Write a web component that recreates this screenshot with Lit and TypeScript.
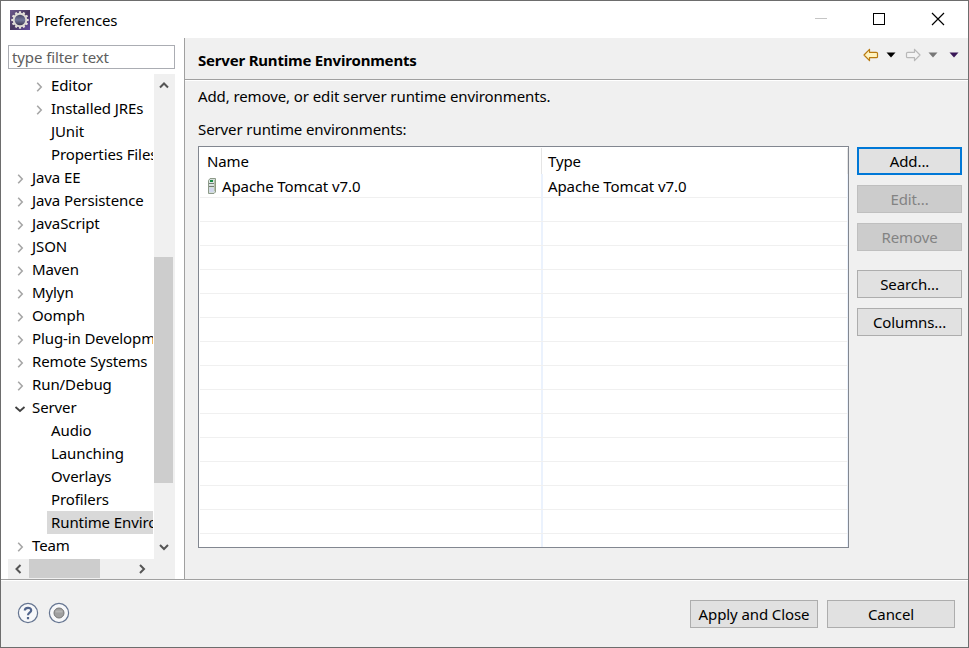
import { LitElement, html, svg, css } from "lit";
import { customElement, property } from "lit/decorators.js";
import { classMap } from "lit/directives/class-map.js";

interface Node { label: string; level: number; state: "closed" | "open" | "leaf"; selected?: boolean; }

const n = (label: string, level = 0, state: Node["state"] = "closed", selected = false): Node => ({ label, level, state, selected });

const NODES: Node[] = [
  n("Editor", 1), n("Installed JREs", 1), n("JUnit", 1, "leaf"), n("Properties Files Editor", 1, "leaf"),
  n("Java EE"), n("Java Persistence"), n("JavaScript"), n("JSON"), n("Maven"), n("Mylyn"), n("Oomph"),
  n("Plug-in Development"), n("Remote Systems"), n("Run/Debug"), n("Server", 0, "open"),
  n("Audio", 1, "leaf"), n("Launching", 1, "leaf"), n("Overlays", 1, "leaf"), n("Profilers", 1, "leaf"),
  n("Runtime Environments", 1, "leaf", true), n("Team"),
];

const chevron = (dir: "up" | "down" | "left" | "right") => {
  const d = { up: "M1 7.5L5 3.5L9 7.5", down: "M1 3L5 7L9 3", left: "M7.5 1L3.5 5L7.5 9", right: "M3 1L7 5L3 9" }[dir];
  return html`<svg width="10" height="10" viewBox="0 0 10 10"><path d=${d} fill="none" stroke="#555" stroke-width="2"/></svg>`;
};

@customElement("pref-tree")
class PrefTree extends LitElement {
  static styles = css`
    :host { display: grid; grid-template: 485px 20px / 146px 20px; background: #f0f0f0; }
    .rows { overflow: hidden; background: #fff; }
    .row { display: flex; height: 23px; white-space: nowrap; align-items: center; line-height: 23px; }
    .twist { width: 20px; height: 23px; flex: none; display: flex; align-items: center; padding: 2px 0 0 2px; box-sizing: border-box; }
    .sub .twist { margin-left: 19px; }
    .label { height: 23px; padding-left: 4px; flex: 1; margin-right: 1px; overflow: hidden; letter-spacing: var(--ls); }
    .selected .label { background: #d9d9d9; }
    .vbar { display: flex; flex-direction: column; align-items: center; padding: 6px 0 7px; box-sizing: border-box; }
    .vthumb { width: 19px; height: 226px; background: #cdcdcd; margin: 167px 1px auto 0; flex: none; }
    .hbar { display: flex; align-items: center; padding: 0 7px 0 5px; height: 20px; box-sizing: border-box; }
    .hthumb { width: 71px; height: 19px; background: #cdcdcd; margin: 0 auto 1px 6px; }
    svg { display: block; flex: none; }
  `;
  render() {
    return html`
      <div class="rows">${NODES.map(r => html`
        <div class=${classMap({ row: true, sub: r.level === 1, selected: !!r.selected })}>
          <span class="twist">${r.state === "leaf" ? "" : r.state === "open"
            ? html`<svg width="18" height="12"><path d="M5.5 4L10 8L14.5 4" fill="none" stroke="#404040" stroke-width="1.8"/></svg>`
            : html`<svg width="18" height="12"><path d="M8.2 1.8L12.2 6L8.2 10.2" fill="none" stroke="#a6a6a6" stroke-width="1.6"/></svg>`}</span>
          <span class="label">${r.label}</span>
        </div>`)}
      </div>
      <div class="vbar">${chevron("up")}<div class="vthumb"></div>${chevron("down")}</div>
      <div class="hbar">${chevron("left")}<div class="hthumb"></div>${chevron("right")}</div>`;
  }
}

@customElement("push-button")
class PushButton extends LitElement {
  @property() label = "";
  @property({ reflect: true }) kind = "normal";
  static styles = css`
    :host { display: block; height: 28px; }
    .face { box-sizing: border-box; height: 28px; border: 1px solid #adadad; background: #e1e1e1; text-align: center; line-height: 27px; letter-spacing: var(--ls); white-space: nowrap; }
    .primary { border: 2px solid #0078d7; line-height: 25px; }
    .disabled { background: #ccc; border-color: #bfbfbf; color: #838383; }
  `;
  render() { return html`<div class="face ${this.kind}">${this.label}</div>`; }
}

@customElement("runtime-table")
class RuntimeTable extends LitElement {
  static styles = css`
    :host { display: grid; grid-template-rows: 27px 24px; grid-auto-rows: 24px; box-sizing: border-box; width: 651px; height: 402px; border: 1px solid #828790; background: #fff; overflow: hidden; letter-spacing: var(--ls); }
    .row { display: grid; grid-template-columns: 343px 305px 1fr; border-bottom: 1px solid #f0f0f0; box-sizing: border-box; margin: 0 1px; }
    .head { border: 0; line-height: 29px; grid-template-columns: 342px 306px 1fr; }
    .cell { border-right: 2px solid #ebf2fd; padding-left: 6px; display: flex; line-height: 25px; }
    .head .cell { border-right: 1px solid #e5e5e5; line-height: 28px; margin-top: 1px; line-height: 27px; padding-left: 7px; }
    .head .cell:nth-child(2) { padding-left: 6px; }
    .cell:nth-child(2) { padding-left: 5px; border-right-width: 1px; }
    .cell svg { margin: 4px 5px 0 1px; flex: none; }
  `;
  render() {
    const icon = html`<svg width="10" height="16" viewBox="0 0 10 16">
      <path d="M1.5 2.5L3 .5H8.500V14L7 15.500H1.500Z" fill="#d4dfd9" stroke="#8d9a89"/>
      <path d="M2 3h5v4H2z" fill="#dce8e4"/><path d="M3 2h3v2H3z" fill="#168b43"/><path d="M2 5.500h5M2 8.500h5" stroke="#777d77"/>
      <path d="M2.500 10h4v4h-4z" fill="#d1d6ee"/><path d="M8 2v11" stroke="#929b7c"/></svg>`;
    return html`
      <div class="row head"><div class="cell">Name</div><div class="cell">Type</div></div>
      <div class="row"><div class="cell">${icon}Apache Tomcat v7.0</div><div class="cell">Apache Tomcat v7.0</div></div>
      ${Array.from({ length: 15 }, () => html`<div class="row"><div class="cell"></div><div class="cell"></div></div>`)}`;
  }
}

@customElement("app-root")
class AppRoot extends LitElement {
  static styles = css`
    :host { display: flex; flex-direction: column; box-sizing: border-box; width: 969px; height: 648px; border: 1px solid #6d6d6d; background: #f0f0f0; color: #000; font: 15px "Noto Sans", "Open Sans", sans-serif; --ls: -0.1px; letter-spacing: var(--ls); overflow: hidden; }
    svg { display: block; flex: none; }
    .title { height: 37px; background: #fff; display: flex; align-items: center; padding-left: 9px; box-sizing: border-box; flex: none; }
    .title .name { margin-left: 5px; flex: 1; }
    .main { height: 541px; display: flex; flex: none; }
    .left { width: 183px; background: #fff; padding: 7px 9px 0 7px; box-sizing: border-box; }
    .filter { height: 24px; box-sizing: border-box; border: 1px solid #abadb3; color: #5e5e5e; padding-left: 3px; line-height: 23px; margin-bottom: 5px; }
    .right { flex: 1; border-left: 1px solid #a0a0a0; }
    .heading { height: 42px; box-sizing: border-box; border-bottom: 1px solid #a0a0a0; box-shadow: 0 1px #fff; padding: 2px 9px 0 13px; display: flex; align-items: center; }
    .heading b { flex: 1; letter-spacing: var(--lb, -0.2px); }
    .nav { display: flex; align-items: center; margin-top: -9px; }
    .content { padding: 5px 6px 0 13px; }
    .line { height: 22px; line-height: 22px; margin-bottom: 11px; }
    .line.second { margin-bottom: 7px; }
    .work { display: flex; gap: 8px; margin-top: -1px; }
    .buttons { flex: 1; display: flex; flex-direction: column; gap: 10px; padding-top: 1px; }
    .gap { margin-top: 9px; }
    .footer { flex: 1; border-top: 1px solid #a0a0a0; box-shadow: inset 0 1px #fff; display: flex; align-items: flex-start; padding: 20px 13px 0 16px; gap: 9px; }
    .footer svg { margin-top: 2px; }
    .apply { width: 128px; margin-left: auto; }
    .cancel { width: 128px; }
  `;
  render() {
    const tri = (c: string) => html`<svg width="10" height="6" viewBox="0 0 10 6"><path d="M.5 .5H9.500L5 5.500Z" fill=${c}/></svg>`;
    const arrow = (fill: string, stroke: string, flip: boolean) => html`<svg width="16" height="14" viewBox="0 0 16 14"><path transform=${flip ? "translate(16 0) scale(-1 1)" : ""} d="M1 7L6.500 1.300V4.300H13.200Q14.500 4.300 14.500 5.300V8.700Q14.500 9.700 13.200 9.700H6.500V12.700Z" fill=${fill} stroke=${stroke} stroke-width="1.200" stroke-linejoin="round"/></svg>`;
    const teeth = Array.from({ length: 12 }, (_, i) => svg`<path d="M8.900 1.300h2.200v3H8.900z" transform="rotate(${i * 30} 10 10)" fill="#e9e6df"/>`);
    return html`
      <div class="title">
        <svg width="20" height="20" viewBox="0 0 20 20">
          <defs><linearGradient id="p" x2="1" y2="1"><stop stop-color="#6d5a8d"/><stop offset=".5" stop-color="#493960"/><stop offset="1" stop-color="#634ba0"/></linearGradient>
          <linearGradient id="d" x2="0" y2="1"><stop stop-color="#403e5c"/><stop offset=".5" stop-color="#73779a"/><stop offset="1" stop-color="#302c46"/></linearGradient></defs>
          <path d="M0 0h20v20H0z" fill="url(#p)"/>${teeth}
          <circle cx="10" cy="10" r="6.300" fill="url(#d)" stroke="#dedbd5" stroke-width="1.900"/></svg>
        <span class="name">Preferences</span>
        <svg width="153" height="37" viewBox="0 0 153 37" fill="none" shape-rendering="crispEdges"><path d="M0 17.500h12" stroke="#c5c5c5"/><path d="M58.500 12.500h11v11h-11z" stroke="#000"/><path d="M117 12l12 12M129 12l-12 12" stroke="#000" shape-rendering="auto" stroke-width="1.200"/></svg>
      </div>
      <div class="main">
        <div class="left"><div class="filter">type filter text</div><pref-tree></pref-tree></div>
        <div class="right">
          <div class="heading"><b>Server Runtime Environments</b>
            <div class="nav">${arrow("#fff3c0", "#b97a10", false)}<span style="width:7px"></span>${tri("#000")}<span style="width:9px"></span>${arrow("#f3f3f3", "#b8b8b8", true)}<span style="width:7px"></span>${tri("#777")}<span style="width:11px"></span>${tri("#3a1858")}</div>
          </div>
          <div class="content">
            <div class="line">Add, remove, or edit server runtime environments.</div>
            <div class="line second">Server runtime environments:</div>
            <div class="work"><runtime-table></runtime-table>
              <div class="buttons">
                <push-button label="Add..." kind="primary"></push-button>
                <push-button label="Edit..." kind="disabled"></push-button>
                <push-button label="Remove" kind="disabled"></push-button>
                <push-button class="gap" label="Search..."></push-button>
                <push-button label="Columns..."></push-button>
              </div>
            </div>
          </div>
        </div>
      </div>
      <div class="footer">
        <svg width="22" height="22" viewBox="0 0 22 22"><circle cx="11" cy="11" r="9.600" fill="#f7f8fa" stroke="#657591" stroke-width="1.200"/><path d="M7.800 8.500C7.800 4.900 14.200 5 14.200 8.300C14.200 10.700 11 10.700 11 13.200M11 15v2.300" fill="none" stroke="#52658c" stroke-width="2.200"/></svg>
        <svg width="22" height="22" viewBox="0 0 22 22"><circle cx="11" cy="11" r="9.600" fill="#f7f8fa" stroke="#657591" stroke-width="1.200"/><circle cx="11" cy="11" r="5" fill="#a0a0a0" stroke="#777"/><path d="M7.500 9.500h7" stroke="#b5b5b5" stroke-width="2"/></svg>
        <push-button class="apply" label="Apply and Close"></push-button>
        <push-button class="cancel" label="Cancel"></push-button>
      </div>`;
  }
}
